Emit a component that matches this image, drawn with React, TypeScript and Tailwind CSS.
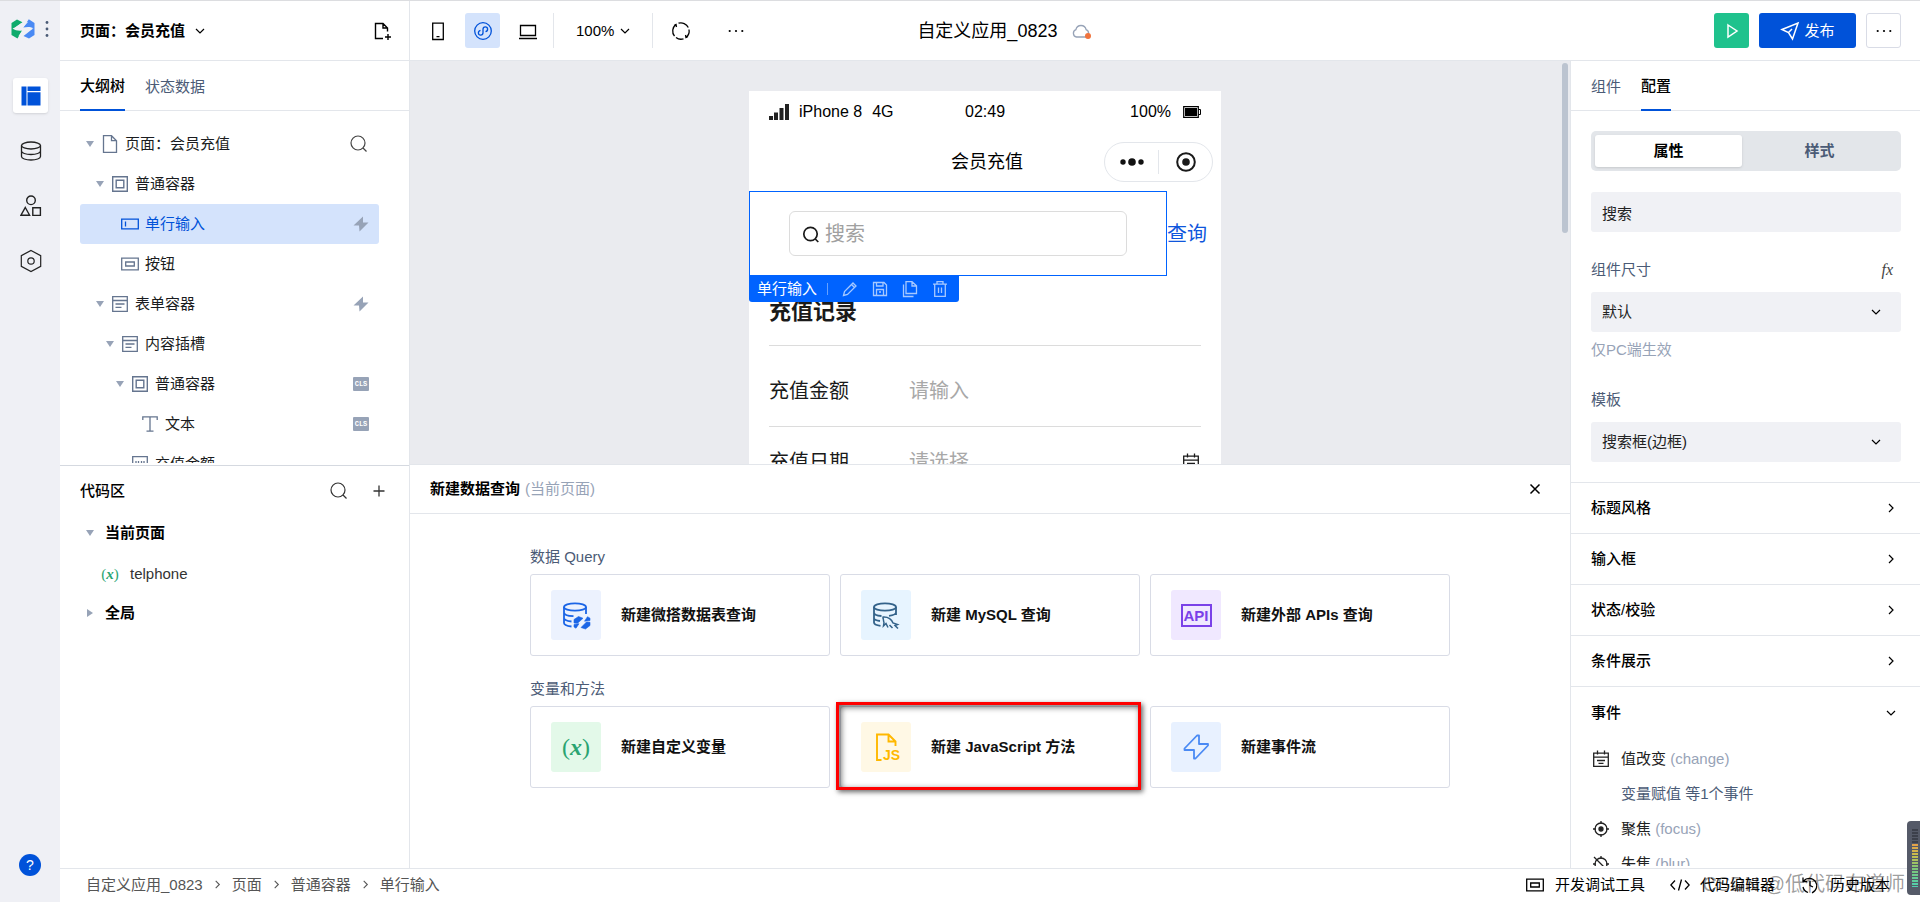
import React from 'react';

type IconProps = { className?: string };

const Svg: React.FC<{ className?: string; box?: string; width?: number; children: React.ReactNode }> = ({
  className = 'w-5 h-5',
  box = '0 0 20 20',
  width = 1.3,
  children,
}) => (
  <svg
    className={`shrink-0 ${className}`}
    viewBox={box}
    fill="none"
    stroke="currentColor"
    strokeWidth={width}
    aria-hidden="true"
  >
    {children}
  </svg>
);

/* ---------- Icons ---------- */

const Chevron: React.FC<IconProps> = ({ className = 'w-2.5 h-2.5' }) => (
  <Svg className={className} box="0 0 10 10" width={1.2}>
    <path d="M1 3l4 4 4-4" />
  </Svg>
);

const SearchIcon: React.FC<IconProps> = ({ className = 'w-5 h-5' }) => (
  <Svg className={className} width={1.2}>
    <circle cx="9" cy="9" r="7" />
    <path d="M14 14l3.500 3.500" />
  </Svg>
);

const PageIcon: React.FC<IconProps> = () => (
  <Svg>
    <path d="M3.5 1.7h8l5 5v11.6h-13zM11.5 1.7v5h5" />
  </Svg>
);

const BoxIcon: React.FC<IconProps> = () => (
  <Svg width={1.4}>
    <path d="M2.7 2.7h14.6v14.6H2.7zM6.2 6.2h7.6v7.6H6.2z" />
  </Svg>
);

const FormIcon: React.FC<IconProps> = () => (
  <Svg>
    <path d="M2.7 2.7h14.6v14.6H2.7zM2.7 6.5h14.6M5.5 10h9M5.5 13.3h6" />
  </Svg>
);

const InputIcon: React.FC<IconProps> = () => (
  <Svg>
    <path d="M1.7 5.2h16.6v9.6H1.7zM5.5 7.5v5" />
  </Svg>
);

const ButtonIcon: React.FC<IconProps> = () => (
  <Svg>
    <path d="M1.7 4.2h16.6v11.6H1.7zM5.7 8h8.6v4H5.7z" />
  </Svg>
);

const TextIcon: React.FC<IconProps> = () => (
  <Svg>
    <path d="M2.8 6V2.8h14.4V6M10 2.8v14.4M6.5 17.2h7" />
  </Svg>
);

const FieldIcon: React.FC<IconProps> = () => (
  <Svg>
    <path d="M2.7 2.7h14.6v14.6H2.7zM6 7v4M8.5 7v4M11.5 7v4M14 7v4" />
  </Svg>
);

const BoltIcon: React.FC<IconProps> = () => (
  <svg className="w-4 h-4 shrink-0 text-[#97a3b7]" viewBox="0 0 16 16" fill="currentColor" aria-hidden="true">
    <path d="M10 .5L.5 9.500H6L6.500 15.500 15.500 6.500H10z" />
  </svg>
);

const Caret: React.FC<IconProps> = ({ className = '' }) => (
  <svg className={`w-2 h-2 text-[#97a3b7] ${className}`} viewBox="0 0 8 8" fill="currentColor" aria-hidden="true">
    <path d="M0 1h8L4 7z" />
  </svg>
);

const Logo: React.FC = () => (
  <svg className="w-6 h-5" viewBox="0 0 24 20" aria-hidden="true">
    <path d="M.5 4L6 .5l5.500 2.700L4.500 8l-2 2L12 9.800 6.500 19.500.500 16z" fill="#0fab6c" />
    <path d="M12 9L17.800.3l5.700 3.700V16l-5.500 3.500-5.500-2.500 7-5.500 2-1.500z" fill="#4a8af4" />
    <path d="M1.500 9.500C7 8 8 5 12 3.500L17 3l-5 5.500c4-.5 7-1 10.500.8C17 11.500 16 14.500 12 16.500L7.500 17l4-5.500c-4 .5-7 0-10-2z" fill="#eff0f5" />
  </svg>
);

const DatabaseIcon: React.FC<IconProps> = ({ className = 'w-[22px] h-[22px]' }) => (
  <Svg className={className} box="0 0 22 22">
    <ellipse cx="11" cy="5.500" rx="9.500" ry="3.500" />
    <path d="M1.500 5.500v11c0 2 4.200 3.500 9.500 3.500s9.500-1.500 9.500-3.500v-11M1.500 11c0 2 4.200 3.500 9.500 3.500s9.500-1.500 9.500-3.500" />
  </Svg>
);

const ShapesIcon: React.FC<IconProps> = () => (
  <Svg className="w-[22px] h-[22px]" box="0 0 22 22" width={1.4}>
    <circle cx="11" cy="5.300" r="4.300" />
    <path d="M5.300 12.500l4.300 7.700H1zM12.800 12.800h7.600v7.600h-7.600z" />
  </Svg>
);

const HexIcon: React.FC<IconProps> = () => (
  <Svg className="w-6 h-6" box="0 0 24 24" width={1.2}>
    <path d="M12 1.500l9.700 5.200v10.600L12 22.500l-9.700-5.200V6.700z" />
    <circle cx="12" cy="12" r="3.200" />
  </Svg>
);

const DotsIcon: React.FC<IconProps> = ({ className = 'w-4 h-4' }) => (
  <svg className={className} viewBox="0 0 16 16" fill="currentColor" aria-hidden="true">
    <circle cx="1.700" cy="8" r="1.100" />
    <circle cx="8" cy="8" r="1.100" />
    <circle cx="14.300" cy="8" r="1.100" />
  </svg>
);

const CalendarIcon: React.FC<IconProps> = ({ className = 'w-5 h-5' }) => (
  <Svg className={className}>
    <path d="M2.700 4.200h14.600v13.100H2.700zM2.700 8.200h14.600M6.500 1.500v4M13.500 1.500v4M6 11.500h8M7.500 14.300h5" />
  </Svg>
);

const TargetIcon: React.FC<{ off?: boolean }> = ({ off }) => (
  <Svg>
    <circle cx="10" cy="10" r="6" />
    <path d="M10 2v3M10 15v3M2 10h3M15 10h3" />
    {off ? <path d="M3 3l14 14" /> : <circle cx="10" cy="10" r="2" fill="currentColor" />}
  </Svg>
);

/* ---------- Header ---------- */

const Header: React.FC = () => (
  <header className="flex h-[60px] shrink-0 items-center border-b border-[#e3e6eb]">
    <div className="flex h-full w-[350px] shrink-0 items-center justify-between border-r border-[#e3e6eb] pl-5 pr-4">
      <button className="flex items-center gap-2.5 font-bold">
        页面：会员充值
        <Chevron />
      </button>
      <button aria-label="新建页面">
        <Svg className="w-[22px] h-[22px]" box="0 0 22 22" width={1.4}>
          <path d="M12 18.500H4.500v-15h7.500l4.500 4.500V11.500M12 3.500V8h4.500M17 14v6M14 17h6" />
        </Svg>
      </button>
    </div>

    <div className="flex items-center pl-2.5">
      <button aria-label="手机" className="flex h-[35px] w-[35px] items-center justify-center">
        <Svg>
          <path d="M4.700 2.200h10.600v16.300H4.700zM8.500 15.700h3" />
        </Svg>
      </button>
      <button
        aria-label="小程序"
        className="ml-2.5 flex h-[35px] w-[35px] items-center justify-center rounded-[3px] bg-[#d4e3fc] text-[#0052d9]"
      >
        <Svg>
          <circle cx="10" cy="10" r="8.300" />
          <path d="M7.500 9.300c-3 .8-2.700 4.900.2 4.900 1.400 0 2.300-1 2.300-2.400V8.200c0-1.400.9-2.400 2.300-2.400 2.900 0 3.200 4.100.2 4.900" />
        </Svg>
      </button>
      <button aria-label="电脑" className="ml-2.5 flex h-[35px] w-[35px] items-center justify-center">
        <Svg>
          <path d="M2.500 4.500h15v10h-15zM1 17.500h18" />
        </Svg>
      </button>
      <div className="ml-2 h-[35px] border-l border-[#e3e6eb]" />
      <button className="ml-[22px] flex items-center gap-1.5">
        100%
        <Chevron />
      </button>
      <div className="ml-[22px] h-[35px] border-l border-[#e3e6eb]" />
      <button aria-label="刷新" className="ml-[18px]">
        <Svg>
          <path d="M3.500 15.200A8.200 8.200 0 015 3.500M7.500 2.200A8.200 8.200 0 0117.300 6.500M18 8.500A8.200 8.200 0 0115 16.500M12.500 17.800A8.200 8.200 0 015 16.500" />
          <path d="M3 4.500L5 3.500 5.500 6M17 15.500L15 16.500 14.500 14" />
        </Svg>
      </button>
      <button aria-label="更多" className="ml-[37px]">
        <DotsIcon />
      </button>
    </div>

    <div className="flex flex-1 items-center gap-3.5 pl-[173px]">
      <h1 className="text-lg">自定义应用_0823</h1>
      <span className="relative text-[#97a3b7]">
        <Svg>
          <path d="M5.500 16a3.800 3.800 0 01-.6-7.300 5.200 5.200 0 0110.200 0 3.800 3.800 0 01-.6 7.300z" />
        </Svg>
        <i className="absolute bottom-0.5 right-0 h-1.5 w-1.5 rounded-full bg-[#f0743e]" />
      </span>
    </div>

    <div className="flex items-center gap-2.5 pr-[19px]">
      <button aria-label="预览" className="flex h-[35px] w-[35px] items-center justify-center rounded-[3px] bg-[#1fc28d] text-white">
        <Svg width={1.500}>
          <path d="M6 4l9 6-9 6z" />
        </Svg>
      </button>
      <button className="flex h-[35px] w-[97px] items-center justify-center gap-1 rounded-[3px] bg-[#0052d9] text-white">
        <Svg width={1.500}>
          <path d="M2 8.500L18 2l-5.500 16-4-6.500zM8.500 11.500L12 8" />
        </Svg>
        发布
      </button>
      <button aria-label="更多操作" className="flex h-[35px] w-[35px] items-center justify-center rounded-[3px] border border-[#d9dce6]">
        <DotsIcon />
      </button>
    </div>
  </header>
);

/* ---------- Left rail ---------- */

const Rail: React.FC = () => (
  <nav className="flex w-[60px] shrink-0 flex-col items-center bg-[#eff0f5] text-[#222]">
    <div className="mt-[18px] flex h-5 w-full items-center gap-2.5 pl-[11px]">
      <Logo />
      <svg className="h-4 w-1 text-[#4b5b76]" viewBox="0 0 4 16" fill="currentColor" aria-hidden="true">
        <circle cx="2" cy="1.500" r="1.400" />
        <circle cx="2" cy="8" r="1.400" />
        <circle cx="2" cy="14.500" r="1.400" />
      </svg>
    </div>
    <div className="mt-[39px] flex w-full flex-col gap-5 pl-[13px]">
      <button aria-label="页面设计" className="flex h-[35px] w-[35px] items-center justify-center rounded-[3px] bg-white shadow-sm">
        <svg className="h-5 w-5" viewBox="0 0 20 20" aria-hidden="true">
          <path d="M.5.500h5v19h-5zM6.500.500h13v4.500h-13zM6.500 6.200h13v13.300h-13z" fill="#0052d9" />
        </svg>
      </button>
      <button aria-label="数据源" className="flex h-[35px] w-[35px] items-center justify-center">
        <DatabaseIcon />
      </button>
      <button aria-label="组件库" className="flex h-[35px] w-[35px] items-center justify-center">
        <ShapesIcon />
      </button>
      <button aria-label="设置" className="flex h-[35px] w-[35px] items-center justify-center">
        <HexIcon />
      </button>
    </div>
    <button aria-label="帮助" className="mb-[26px] mt-auto h-[22px] w-[22px] rounded-full bg-[#0052d9] text-sm leading-[22px] text-white">
      ?
    </button>
  </nav>
);

/* ---------- Outline tree ---------- */

interface TreeNode {
  label: string;
  depth: number;
  icon: React.FC<IconProps>;
  leaf?: boolean;
  active?: boolean;
  mark?: 'bolt' | 'cls' | 'search';
}

const tree: TreeNode[] = [
  { label: '页面：会员充值', depth: 0, icon: PageIcon, mark: 'search' },
  { label: '普通容器', depth: 1, icon: BoxIcon },
  { label: '单行输入', depth: 2, icon: InputIcon, leaf: true, active: true, mark: 'bolt' },
  { label: '按钮', depth: 2, icon: ButtonIcon, leaf: true },
  { label: '表单容器', depth: 1, icon: FormIcon, mark: 'bolt' },
  { label: '内容插槽', depth: 2, icon: FormIcon },
  { label: '普通容器', depth: 3, icon: BoxIcon, mark: 'cls' },
  { label: '文本', depth: 4, icon: TextIcon, leaf: true, mark: 'cls' },
  { label: '充值金额', depth: 3, icon: FieldIcon, leaf: true },
];

const TreeRow: React.FC<{ node: TreeNode }> = ({ node }) => {
  const Icon = node.icon;
  return (
    <li
      className={`flex h-10 items-center rounded-[3px] pr-2.5 ${
        node.active ? 'bg-[#d4e3fc] text-[#0052d9]' : 'text-[#1a1c20]'
      }`}
    >
      <button className="flex flex-1 items-center" style={{ paddingLeft: node.depth * 10 }}>
        <span className="flex w-5 justify-center">{!node.leaf && <Caret />}</span>
        <span className={`mr-[5px] ${node.active ? '' : 'text-[#65758f]'}`}>
          <Icon />
        </span>
        {node.label}
      </button>
      {node.mark === 'bolt' && <BoltIcon />}
      {node.mark === 'cls' && (
        <span className="h-3.5 w-4 rounded-[1px] bg-[#97a3b7] text-center font-mono text-[7px] font-bold leading-[14px] text-white">
          CLS
        </span>
      )}
      {node.mark === 'search' && (
        <button aria-label="搜索组件" className="text-[#444]">
          <SearchIcon className="w-5 h-5" />
        </button>
      )}
    </li>
  );
};

const LeftPanel: React.FC = () => (
  <aside className="flex w-[350px] shrink-0 flex-col border-r border-[#e3e6eb]">
    <div className="flex h-[50px] shrink-0 gap-5 border-b border-[#e3e6eb] pl-5">
      <button className="-mb-px border-b-2 border-[#0052d9] pt-0.5 font-medium">大纲树</button>
      <button className="pt-0.5 text-[#4b5b76]">状态数据</button>
    </div>
    <div className="h-[355px] shrink-0 overflow-hidden border-b border-[#d5d9e0] pb-0.5 pl-5 pr-[30px]">
      <ul className="h-full overflow-hidden pt-[13px]">
        {tree.map((node, i) => (
          <TreeRow key={i} node={node} />
        ))}
      </ul>
    </div>
    <div className="flex h-[50px] items-center pl-5 pr-5 text-[#333]">
      <h2 className="flex-1 font-medium text-black">代码区</h2>
      <button aria-label="搜索代码">
        <SearchIcon />
      </button>
      <button aria-label="新增代码" className="ml-5">
        <Svg>
          <path d="M10 4.500v11M4.500 10h11" />
        </Svg>
      </button>
    </div>
    <button className="flex h-[34px] items-center gap-[11px] pl-[26px] font-bold">
      <Caret />
      当前页面
    </button>
    <button className="flex h-12 items-center gap-2.5 pl-10 text-[#333]">
      <span className="w-5 text-center font-['Liberation_Serif',serif] text-[#2ba471]">
        (<i className="font-bold">x</i>)
      </span>
      telphone
    </button>
    <button className="flex h-[30px] items-center gap-[11px] pl-[26px] font-bold">
      <Caret className="-rotate-90" />
      全局
    </button>
  </aside>
);

/* ---------- Phone preview ---------- */

const Phone: React.FC = () => (
  <div className="mx-auto w-[472px] bg-white text-[#1a1a1a]">
    <div className="flex h-[41px] items-center px-5 text-base text-black">
      <div className="flex flex-1 items-center gap-2.5">
        <svg className="h-4 w-5" viewBox="0 0 20 16" fill="#222" aria-hidden="true">
          <path d="M0 12h4v4H0zM5 8.500h4V16H5zM10.500 4h4v12h-4zM16 0h4v16h-4z" />
        </svg>
        <span>iPhone 8</span>
        <span>4G</span>
      </div>
      <span>02:49</span>
      <div className="flex flex-1 items-center justify-end gap-3">
        100%
        <svg className="h-3 w-[18px]" viewBox="0 0 18 12" aria-hidden="true">
          <path d="M.7.700h14.600v10.600H.7z" fill="#fff" stroke="#000" strokeWidth="1.200" />
          <path d="M2 2h12v8H2z" />
          <path d="M15.500 3.500h2v5h-2" fill="none" stroke="#000" />
        </svg>
      </div>
    </div>
    <div className="grid h-[59px] grid-cols-[1fr_auto_1fr] items-start pr-2 pt-2.5">
      <span />
      <span className="pt-1.5 pl-3 text-lg text-black">会员充值</span>
      <div className="flex h-10 w-[109px] items-center justify-self-end rounded-full border border-[#e3e6eb]">
        <button aria-label="菜单" className="flex flex-1 justify-center">
          <svg className="h-2 w-6" viewBox="0 0 24 8" fill="#111" aria-hidden="true">
            <circle cx="3" cy="4" r="2.700" />
            <circle cx="12" cy="4" r="3.800" />
            <circle cx="21" cy="4" r="2.700" />
          </svg>
        </button>
        <div className="h-6 border-l border-[#e3e6eb]" />
        <button aria-label="关闭小程序" className="flex flex-1 justify-center">
          <Svg width={2}>
            <circle cx="10" cy="10" r="8.800" />
            <circle cx="10" cy="10" r="2.800" fill="currentColor" />
          </Svg>
        </button>
      </div>
    </div>

    <div className="relative flex items-center">
      <div className="h-[85px] w-[418px] border border-[#0063ff] px-[39px] pt-[19px]">
        <label className="flex h-[45px] items-center gap-1 rounded-md border border-[#dcdcdc] px-[11px]">
          <Svg className="h-5 w-5" width={1.700}>
            <circle cx="9.500" cy="10" r="6.700" />
            <path d="M14.300 15l3 3" />
          </Svg>
          <input aria-label="搜索" placeholder="搜索" className="w-full min-w-0 text-xl outline-none placeholder:text-[#a0a0a0]" />
        </label>
      </div>
      <button className="text-xl text-[#0f56dc]">查询</button>
      <div className="absolute left-0 top-full z-10 flex h-[26px] w-[210px] items-center rounded-b-[3px] bg-[#0063ff] pl-2 text-white">
        单行输入
        <i className="ml-2.5 h-3 border-l border-white/40" />
        <span className="ml-3 flex gap-2.5 text-white/65">
          <button aria-label="编辑">
            <Svg>
              <path d="M3.500 16.500l1-4L13 4l3 3-8.500 8.500zM11.500 5.500l3 3" />
            </Svg>
          </button>
          <button aria-label="保存">
            <Svg>
              <path d="M3.500 3.500H14l2.500 2.500v10.500h-13zM6.500 3.500V7H13V3.500M6.500 16.500v-6h7v6M9 13h2" />
            </Svg>
          </button>
          <button aria-label="复制">
            <Svg>
              <path d="M6 2.700h6l4.500 4v7.800H6zM12 2.700V7h4.500M3.500 5.500v12h10" />
            </Svg>
          </button>
          <button aria-label="删除">
            <Svg>
              <path d="M3 5.200h14M7 5V2.700h6V5M4.700 5.200v12.100h10.600V5.200M8.500 8.500v5.500M11.500 8.500v5.500" />
            </Svg>
          </button>
        </span>
      </div>
    </div>

    <div className="px-5 text-xl">
      <h2 className="flex h-[70px] items-center border-b border-[#dcdcdc] pt-1 text-[22px] font-bold">充值记录</h2>
      <div className="flex h-[81px] items-center border-b border-[#dcdcdc] pt-2.5">
        <label htmlFor="amount" className="w-[140px]">
          充值金额
        </label>
        <input id="amount" placeholder="请输入" className="min-w-0 flex-1 outline-none placeholder:text-[#a8a8a8]" />
      </div>
      <div className="flex h-[70px] items-center">
        <label htmlFor="date" className="w-[140px]">
          充值日期
        </label>
        <input id="date" placeholder="请选择" className="min-w-0 flex-1 outline-none placeholder:text-[#a8a8a8]" />
        <CalendarIcon />
      </div>
    </div>
  </div>
);

/* ---------- Query panel ---------- */

const Card: React.FC<{ title: string; tint: string; marked?: boolean; children: React.ReactNode }> = ({
  title,
  tint,
  marked,
  children,
}) => (
  <button className="relative flex h-[82px] items-center gap-5 rounded-[3px] border border-[#d9dce6] pl-5 font-bold">
    <span className={`flex h-[50px] w-[50px] items-center justify-center rounded-[3px] ${tint}`}>{children}</span>
    {title}
    {marked && (
      <span className="absolute -bottom-[3px] -left-[5px] -right-[2px] -top-[5px] border-[3px] border-[#ff0000] shadow-[2px_2px_5px_rgba(0,0,0,0.6),inset_2px_2px_6px_rgba(0,0,0,0.6)]" />
    )}
  </button>
);

const QueryPanel: React.FC = () => (
  <section className="flex flex-1 flex-col border-t border-[#e3e6eb] bg-white">
    <div className="flex h-[49px] shrink-0 items-center border-b border-[#e3e6eb] pl-5 pr-[23px]">
      <h2 className="font-bold">新建数据查询</h2>
      <span className="ml-[5px] flex-1 text-[#97a3b7]">(当前页面)</span>
      <button aria-label="关闭">
        <Svg className="w-6 h-6" box="0 0 24 24" width={1.500}>
          <path d="M7.500 7.500l9 9M16.500 7.500l-9 9" />
        </Svg>
      </button>
    </div>
    <div className="mx-auto w-full max-w-[920px] pt-[31px] text-[#111]">
      <h3 className="h-[29px] leading-6 text-[#4b5b76]">数据 Query</h3>
      <div className="grid grid-cols-3 gap-2.5">
        <Card title="新建微搭数据表查询" tint="bg-[#ecf2fe] text-[#1b65e6]">
          <Svg className="h-[30px] w-[30px]" box="0 0 30 30" width={1.800}>
            <ellipse cx="14" cy="7" rx="11" ry="3.700" />
            <path d="M3 7v16c0 1.700 3 3 7.500 3.500M3 12.500c0 2 4 3.500 9.500 3.700M3 18c0 1.700 3 3 7.500 3.500M25 7v7" />
            <path d="M13 19.500l4.500-3 4.500 1.800-5.500 5-3.500-.3zM13 24.500l5-.8-3 4.500-2-1.200zM29 25.500l-4.500 3.500-4.500-1.500 5.500-5.500 3.500.3zM29 20.500l-5.500.7 3-4.500 2.500 1.500z" fill="currentColor" strokeWidth="0.600" />
          </Svg>
        </Card>
        <Card title="新建 MySQL 查询" tint="bg-[#e7f4ff] text-[#33628a]">
          <Svg className="h-[30px] w-[30px]" box="0 0 30 30" width={1.800}>
            <ellipse cx="14" cy="7" rx="11" ry="3.700" />
            <path d="M3 7v15.500c0 1.700 2.500 2.800 6.500 3.300M3 12.500c0 2 3.500 3.200 7.500 3.500M3 18c0 1.500 2 2.500 6 3M25 7v8M18 15.800c3-.4 7-1.300 7-3.300" />
            <path d="M11.500 17c5.500-.5 9 2 10.500 6l4.500 1.500-2.500 1 3 3M11.500 17c1.500 2 .5 3.500 1.500 5.500l-.5 3.500 2.500-2.500 2 4M18.500 25l3 3" strokeWidth="1.500" />
          </Svg>
        </Card>
        <Card title="新建外部 APIs 查询" tint="bg-[#f0e8ff] text-[#7a41e8]">
          <span className="flex h-[23px] w-[31px] items-center justify-center border-2 border-current text-[15px] leading-none">
            API
          </span>
        </Card>
      </div>
      <h3 className="mt-[21px] h-[29px] leading-6 text-[#4b5b76]">变量和方法</h3>
      <div className="grid grid-cols-3 gap-2.5">
        <Card title="新建自定义变量" tint="bg-[#e3f9e9] text-[#2ba471]">
          <span className="font-['Liberation_Serif',serif] text-2xl font-normal">
            (<i className="font-bold">x</i>)
          </span>
        </Card>
        <Card title="新建 JavaScript 方法" tint="bg-[#fff8e5] text-[#ffb800]" marked>
          <Svg className="h-[30px] w-[30px]" box="0 0 30 30" width={1.900}>
            <path d="M10.500 28H6V2.500h11.500l7 7V14M17.500 2.500v7h7" />
            <text x="12" y="28" fill="currentColor" stroke="none" fontSize="14" fontWeight="700">
              JS
            </text>
          </Svg>
        </Card>
        <Card title="新建事件流" tint="bg-[#e8f1ff] text-[#4a8af4]">
          <Svg className="h-[30px] w-[30px]" box="0 0 30 30" width={1.800}>
            <path d="M16 3.500L3.500 16.500v1.500H13V26.500h1.500L27 13.500V12h-9V3.500z" strokeLinejoin="round" />
          </Svg>
        </Card>
      </div>
    </div>
  </section>
);

/* ---------- Right panel ---------- */

const SelectField: React.FC<{ id: string; label: string; value: string; fx?: boolean }> = ({ id, label, value, fx }) => (
  <div>
    <div className="flex h-8 items-center justify-between pr-2 text-[#4b5b76]">
      <label htmlFor={id}>{label}</label>
      {fx && <i className="font-['Liberation_Serif',serif] text-base leading-none text-[#444]">fx</i>}
    </div>
    <div className="relative mt-1.5">
      <select id={id} className="h-10 w-full appearance-none rounded-[3px] bg-[#f0f1f5] px-[11px] text-[#222]">
        <option>{value}</option>
      </select>
      <Chevron className="pointer-events-none absolute right-5 top-[15px] h-2.5 w-2.5" />
    </div>
  </div>
);

const sections = ['标题风格', '输入框', '状态/校验', '条件展示'];

const RightPanel: React.FC = () => (
  <aside className="flex w-[350px] shrink-0 flex-col overflow-hidden border-l border-[#e3e6eb] bg-white">
    <div className="flex h-[50px] shrink-0 gap-5 border-b border-[#e3e6eb] pl-5">
      <button className="pt-0.5 text-[#4b5b76]">组件</button>
      <button className="-mb-px border-b-2 border-[#0052d9] pt-0.5 font-medium">配置</button>
    </div>
    <div className="h-[372px] shrink-0 border-b border-[#e3e6eb] pl-5 pr-[19px] pt-5">
      <div className="grid h-10 grid-cols-[147px_1fr] rounded-[5px] bg-[#e3e6ea] p-1 font-bold">
        <button className="rounded-[3px] bg-white shadow-sm">属性</button>
        <button className="text-[#4b5b76]">样式</button>
      </div>
      <input aria-label="占位文字" defaultValue="搜索" className="mb-[22px] mt-[21px] h-10 w-full rounded-[3px] bg-[#f0f1f5] px-[11px] text-[#222]" />
      <SelectField id="size" label="组件尺寸" value="默认" fx />
      <p className="mb-4 h-9 leading-9 text-[#97a3b7]">仅PC端生效</p>
      <SelectField id="template" label="模板" value="搜索框(边框)" />
    </div>
    {sections.map((name) => (
      <button key={name} className="flex h-[51px] shrink-0 items-center justify-between border-b border-[#e3e6eb] pl-5 pr-6 font-medium">
        {name}
        <Chevron className="h-2.5 w-2.5 -rotate-90" />
      </button>
    ))}
    <button className="flex h-[51px] shrink-0 items-center justify-between pl-5 pr-6 font-medium">
      事件
      <Chevron />
    </button>
    <ul className="mb-0.5 min-h-0 flex-1 overflow-hidden pl-5 pt-[3px] text-[#222]">
      <li className="flex h-[35px] items-center gap-2.5">
        <CalendarIcon />
        <span>
          值改变 <span className="text-[#97a3b7]">(change)</span>
        </span>
      </li>
      <li className="flex h-[35px] items-center pl-[30px]">
        <a href="#change" className="text-[#4b5b76]">
          变量赋值 等1个事件
        </a>
      </li>
      <li className="flex h-[35px] items-center gap-2.5">
        <TargetIcon />
        <span>
          聚焦 <span className="text-[#97a3b7]">(focus)</span>
        </span>
      </li>
      <li className="flex h-[35px] items-center gap-2.5">
        <TargetIcon off />
        <span>
          失焦 <span className="text-[#97a3b7]">(blur)</span>
        </span>
      </li>
    </ul>
  </aside>
);

/* ---------- Status bar ---------- */

const crumbs = ['自定义应用_0823', '页面', '普通容器', '单行输入'];

const StatusBar: React.FC = () => (
  <footer className="flex h-[34px] shrink-0 items-center border-t border-[#e3e6eb] bg-white pb-0.5 pl-[26px] pr-[30px]">
    <nav className="flex flex-1 items-center text-[#555]">
      {crumbs.map((crumb, i) => (
        <React.Fragment key={crumb}>
          {i > 0 && <Chevron className="mx-2.5 h-[9px] w-[9px] -rotate-90" />}
          <a href="#crumb">{crumb}</a>
        </React.Fragment>
      ))}
    </nav>
    <div className="flex gap-[25px]">
      <button className="flex items-center gap-2.5">
        <ButtonIcon />
        开发调试工具
      </button>
      <button className="flex items-center gap-2.5">
        <Svg>
          <path d="M5 5.500L.8 10 5 14.500M15 5.500l4.200 4.500-4.200 4.500M11.500 4.500l-3 11" />
        </Svg>
        代码编辑器
      </button>
      <button className="flex items-center gap-2.5">
        <Svg>
          <path d="M3.500 6A7.500 7.500 0 1112 17.800M3 2.500v4h4M3 12a7.500 7.500 0 005 5.500M10 6v4.500l3 1.500" />
        </Svg>
        历史版本
      </button>
    </div>
  </footer>
);

const LevelMeter: React.FC = () => (
  <div className="absolute bottom-[7px] right-0 z-20 h-[74px] w-[13px] rounded-l bg-[#555a68] pl-[5px] pt-2">
    <div className="h-[58px] w-[6px] bg-[linear-gradient(#3c404b_0_25%,#e5a04a_26%,#c9bd4c_45%,#7fc877_68%,#4fcfb0)]">
      <div className="h-full bg-[repeating-linear-gradient(transparent_0_2px,#555a68_2px_3px)]" />
    </div>
  </div>
);

const App: React.FC = () => (
  <div className="relative flex h-screen overflow-hidden border-t border-[#dcdde0] bg-white font-['Liberation_Sans','Noto_Sans_CJK_SC',sans-serif] text-[15px] leading-6 text-black">
    <Rail />
    <div className="flex min-w-0 flex-1 flex-col">
      <Header />
      <div className="flex min-h-0 flex-1">
        <LeftPanel />
        <main className="flex min-w-0 flex-1 flex-col">
          <div className="relative h-[403px] shrink-0 overflow-hidden bg-[#eaebef] pr-2.5 pt-[30px]">
            <Phone />
            <div className="absolute right-0.5 top-0.5 h-[170px] w-1.5 rounded-full bg-[#bcc4d0]" />
          </div>
          <QueryPanel />
        </main>
        <RightPanel />
      </div>
      <StatusBar />
    </div>
    <LevelMeter />
    <span className="pointer-events-none absolute bottom-0 right-[15px] z-10 text-xl leading-9 text-black/40">
      CSDN @低代码布道师
    </span>
  </div>
);

export default App;
